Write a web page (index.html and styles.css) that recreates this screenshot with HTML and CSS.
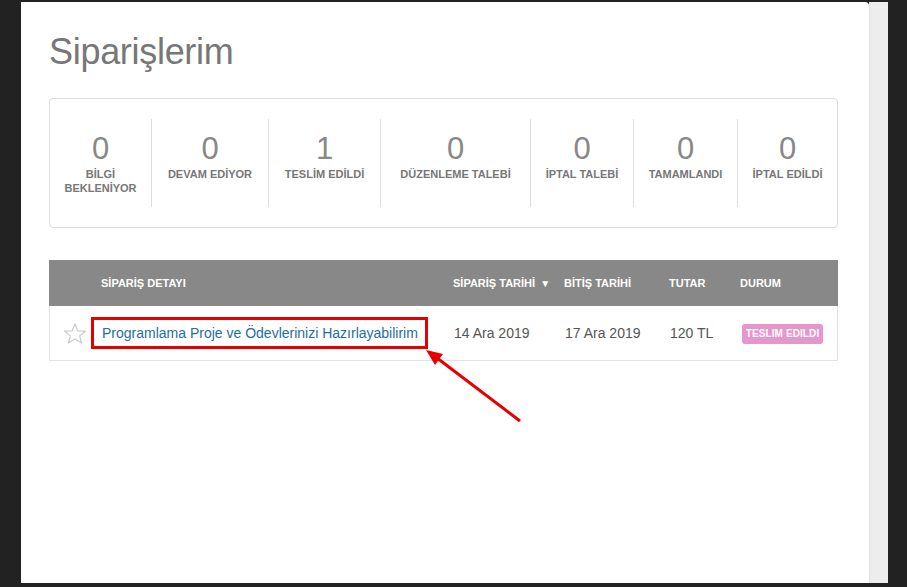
FILE: index.html
```html
<!DOCTYPE html>
<html lang="tr">
<head>
<meta charset="utf-8">
<title>Siparişlerim</title>
<link rel="stylesheet" href="styles.css">
</head>
<body>
<div class="window">
  <main class="page">
    <h1 class="title">Siparişlerim</h1>

    <section class="stats">
      <div class="stat"><div class="stat-num">0</div><div class="stat-label">BİLGİ<br>BEKLENİYOR</div></div>
      <div class="stat"><div class="stat-num">0</div><div class="stat-label">DEVAM EDİYOR</div></div>
      <div class="stat"><div class="stat-num">1</div><div class="stat-label">TESLİM EDİLDİ</div></div>
      <div class="stat"><div class="stat-num">0</div><div class="stat-label">DÜZENLEME TALEBİ</div></div>
      <div class="stat"><div class="stat-num">0</div><div class="stat-label">İPTAL TALEBİ</div></div>
      <div class="stat"><div class="stat-num">0</div><div class="stat-label">TAMAMLANDI</div></div>
      <div class="stat"><div class="stat-num">0</div><div class="stat-label">İPTAL EDİLDİ</div></div>
    </section>

    <section class="orders">
      <div class="orders-head">
        <div></div>
        <div>SİPARİŞ DETAYI</div>
        <div>SİPARİŞ TARİHİ <span class="caret">▼</span></div>
        <div>BİTİŞ TARİHİ</div>
        <div>TUTAR</div>
        <div>DURUM</div>
      </div>
      <div class="orders-row">
        <div class="star-cell">
          <svg class="star" width="22" height="21" viewBox="0 0 22 21"><polygon points="11,1 13.9,7.9 21.3,8.2 15.6,12.9 17.6,20.1 11,16.1 4.4,20.1 6.4,12.9 0.7,8.2 8.1,7.9" fill="none" stroke="#c9c9c9" stroke-width="1.2" stroke-linejoin="round"/></svg>
        </div>
        <div><a class="order-link" href="#">Programlama Proje ve Ödevlerinizi Hazırlayabilirim</a></div>
        <div class="cell-text">14 Ara 2019</div>
        <div class="cell-text">17 Ara 2019</div>
        <div class="cell-text">120 TL</div>
        <div><span class="badge">TESLIM EDILDI</span></div>
      </div>
    </section>
  </main>
  <aside class="scroll-strip"></aside>
</div>

<svg class="arrow" width="907" height="587" viewBox="0 0 907 587">
  <line x1="520" y1="421" x2="437" y2="358" stroke="#e60000" stroke-width="3"/>
  <polygon points="426,350 443,354 435,365" fill="#e60000"/>
</svg>
</body>
</html>
```

FILE: styles.css
```css
html, body {
  margin: 0;
  padding: 0;
}
body {
  background: #222222;
  position: relative;
  width: 907px;
  height: 587px;
  overflow: hidden;
  font-family: "Liberation Sans", Arial, sans-serif;
}
.window {
  margin: 2px 0 0 21px;
  width: 867px;
  height: 581px;
  display: flex;
}
.page {
  flex: 1;
  background: #ffffff;
  border-top-right-radius: 4px;
  padding: 30px 31px 0 28px;
}
.scroll-strip {
  width: 18px;
  background: #ededed;
  border-left: 1px solid #e0e0e0;
}
.title {
  margin: 0;
  font-size: 36px;
  line-height: 40px;
  font-weight: normal;
  color: #777777;
  letter-spacing: -0.3px;
}
.stats {
  margin-top: 26px;
  border: 1px solid #dddddd;
  border-radius: 4px;
  padding: 20px 0;
  display: grid;
  grid-template-columns: 101px 117px 112px 150px 103px 104px 1fr;
}
.stat {
  height: 88px;
  border-left: 1px solid #dddddd;
  text-align: center;
  padding-top: 13px;
  box-sizing: border-box;
}
.stat:first-child {
  border-left: none;
}
.stat-num {
  font-size: 31px;
  line-height: 33px;
  color: #888888;
  font-weight: 300;
}
.stat-label {
  margin-top: 2px;
  font-size: 11px;
  line-height: 14px;
  font-weight: bold;
  color: #777777;
}
.orders {
  margin-top: 32px;
}
.orders-head,
.orders-row {
  display: grid;
  grid-template-columns: 52px 352px 111px 105px 71px 1fr;
  align-items: center;
}
.orders-head {
  height: 46px;
  background: #888888;
  color: #ffffff;
  font-size: 11px;
  font-weight: bold;
}
.caret {
  font-size: 10px;
  margin-left: 2px;
  vertical-align: 0;
}
.orders-row {
  height: 54px;
  border: 1px solid #e3e3e3;
  border-top: none;
}
.star-cell {
  display: flex;
  justify-content: flex-start;
  padding-left: 14px;
}
.star {
  display: block;
}
.order-link {
  position: relative;
  font-size: 14px;
  color: #1f6e9e;
  text-decoration: none;
}
.order-link::after {
  content: "";
  position: absolute;
  left: -11px;
  right: -10px;
  top: -8px;
  bottom: -8px;
  border: 3px solid #e60000;
}
.cell-text {
  font-size: 14px;
  color: #555555;
}
.badge {
  display: inline-block;
  width: 81px;
  height: 20px;
  line-height: 20px;
  margin-left: 1px;
  background: #e596cc;
  border-radius: 3px;
  color: #ffffff;
  font-size: 10px;
  font-weight: bold;
  letter-spacing: 0.1px;
  text-align: center;
  white-space: nowrap;
}
.arrow {
  position: absolute;
  left: 0;
  top: 0;
  pointer-events: none;
}
```
